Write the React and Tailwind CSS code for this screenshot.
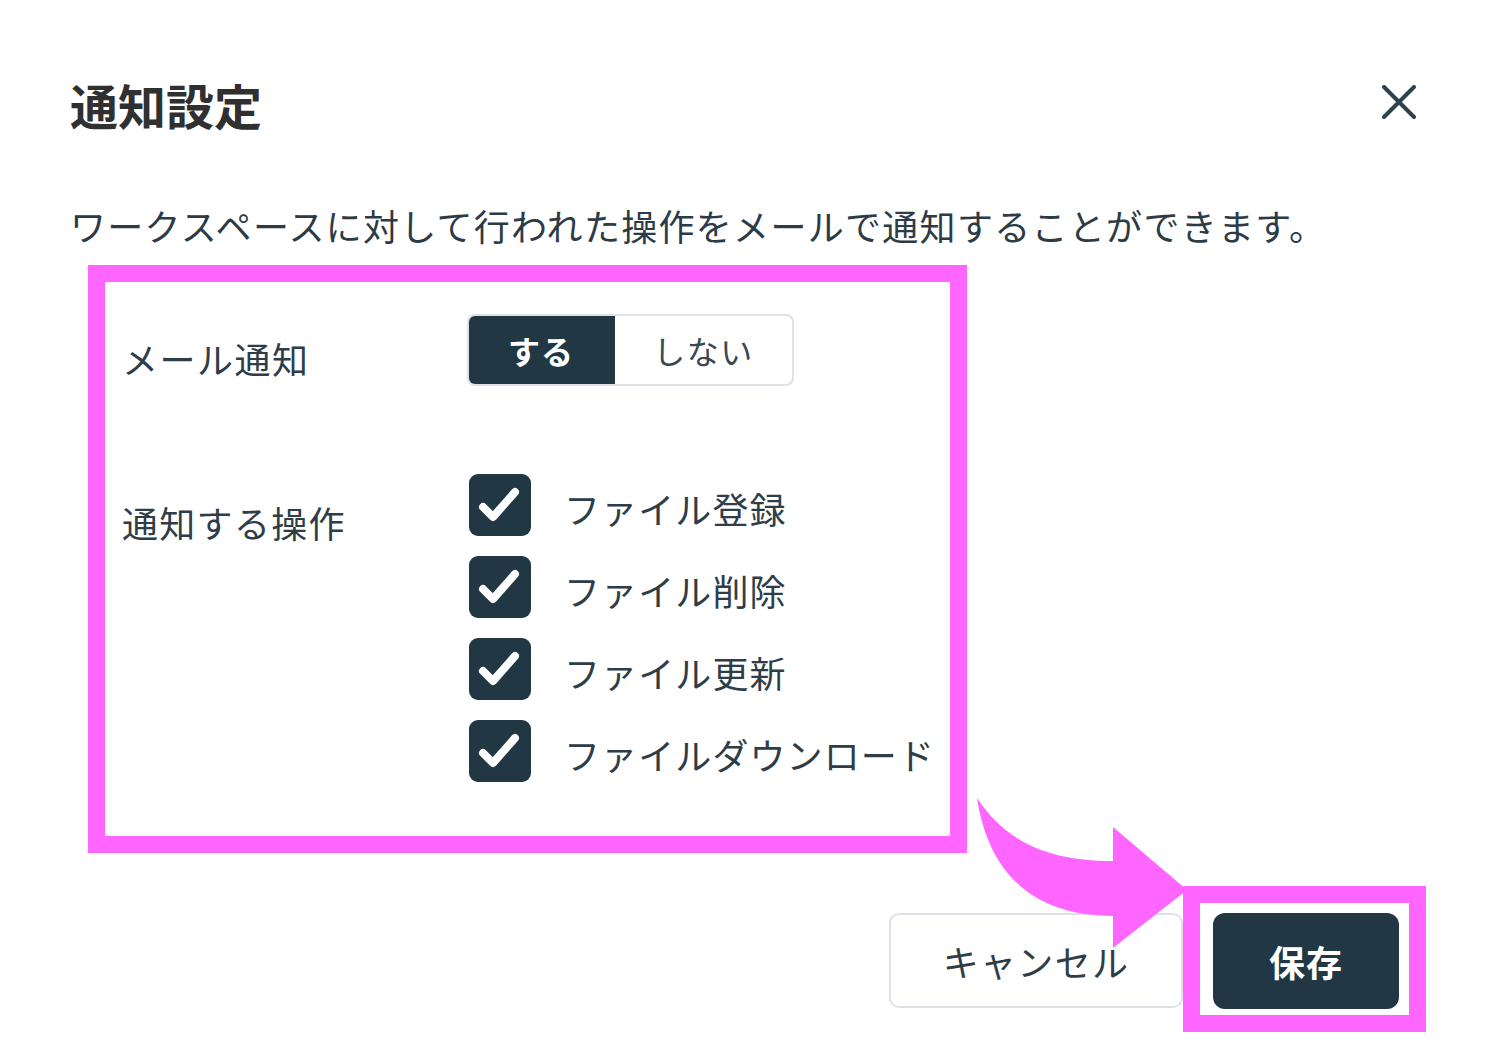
import { useState } from 'react'

const OPERATIONS = ['ファイル登録', 'ファイル削除', 'ファイル更新', 'ファイルダウンロード']

function CheckBox() {
  return (
    <div className="w-[62px] h-[62px] rounded-[9px] bg-[#213744] flex items-center justify-center shrink-0">
      <svg width="62" height="62" viewBox="0 0 62 62">
        <path d="M14 33 L24 43 L46 18" fill="none" stroke="#fff" strokeWidth="8" strokeLinecap="round" strokeLinejoin="round" />
      </svg>
    </div>
  )
}

export default function App() {
  const [notify, setNotify] = useState(true)

  return (
    <div
      className="relative w-[1500px] h-[1052px] bg-white overflow-hidden pl-[70px]"
      style={{ fontFamily: '"Noto Sans CJK JP", "Noto Sans", sans-serif' }}
    >
      <div className="flex items-center justify-between pt-[78px] pr-[84px]">
        <h1 className="text-[48px] leading-[52px] font-bold text-[#303030]">通知設定</h1>
        <svg width="34" height="34" viewBox="0 0 34 34" className="mt-[-4px]">
          <path d="M2 2 L32 32 M32 2 L2 32" stroke="#2e4250" strokeWidth="4" strokeLinecap="round" />
        </svg>
      </div>

      <p className="mt-[77px] text-[36px] leading-[36px] tracking-[1.3px] text-[#2c3b46]">
        ワークスペースに対して行われた操作をメールで通知することができます。
      </p>

      <div className="mt-[22px] ml-[18px] w-[879px] h-[588px] border-[17px] border-[#ff66ff] pl-[17px]">
        <div className="flex items-start">
          <div className="w-[345px] mt-[58px] text-[36px] leading-[36px] tracking-[1.5px] text-[#2e3d48]">メール通知</div>
          <div className="mt-[32px] flex h-[72px] rounded-[8px] border-2 border-[#dde2e8] overflow-hidden">
            <button
              onClick={() => setNotify(true)}
              className={
                notify
                  ? 'w-[148px] -m-[2px] mr-0 bg-[#213744] text-white text-[32px] font-semibold tracking-[1px] rounded-l-[8px]'
                  : 'w-[148px] text-[#3a4852] text-[32px] tracking-[1px]'
              }
            >
              する
            </button>
            <button
              onClick={() => setNotify(false)}
              className={
                notify
                  ? 'w-[177px] text-[#3a4852] text-[32px] tracking-[1.5px]'
                  : 'w-[177px] bg-[#213744] text-white text-[32px] font-semibold tracking-[1.5px]'
              }
            >
              しない
            </button>
          </div>
        </div>

        <div className="flex items-start mt-[88px]">
          <div className="w-[347px] mt-[30px] text-[36px] leading-[36px] tracking-[1.3px] text-[#2e3d48]">通知する操作</div>
          <div className="flex flex-col gap-[20px]">
            {OPERATIONS.map((op) => (
              <div key={op} className="flex items-center gap-[33px]">
                <CheckBox />
                <span className="text-[36px] leading-[36px] tracking-[1.1px] text-[#2e3d48] mt-[6px]">{op}</span>
              </div>
            ))}
          </div>
        </div>
      </div>

      <div className="flex justify-end items-start pr-[74px] mt-[33px]">
        <button className="mt-[27px] w-[294px] h-[95px] rounded-[10px] border-2 border-[#dde2e8] text-[36px] tracking-[1.3px] text-[#2e3d48]">
          キャンセル
        </button>
        <div className="border-[17px] border-[#ff66ff] pl-[13px] pr-[10px] pt-[10px] pb-[6px]">
          <button className="w-[186px] h-[96px] rounded-[12px] bg-[#213744] text-white text-[36px] font-bold tracking-[1px]">
            保存
          </button>
        </div>
      </div>

      <svg className="absolute left-0 top-0 pointer-events-none" width="1500" height="1052">
        <path
          d="M977 798 C1005 840 1045 861 1113 861 L1113 827 L1187 890 L1113 948 L1113 916 C1030 916 988 870 977 798 Z"
          fill="#ff66ff"
        />
      </svg>
    </div>
  )
}
